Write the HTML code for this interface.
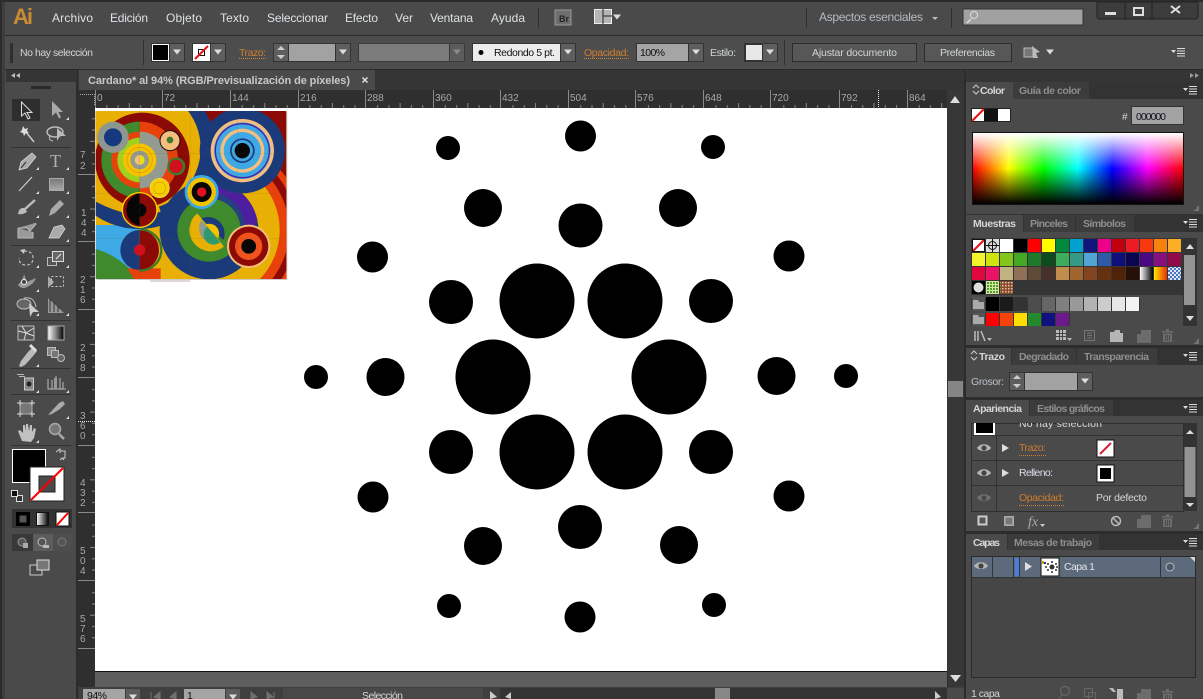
<!DOCTYPE html>
<html lang="es"><head><meta charset="utf-8"><title>Cardano</title>
<style>
html,body{margin:0;padding:0;background:#4a4a4a;width:1203px;height:699px;overflow:hidden}
svg{display:block}
text{font-family:"Liberation Sans",sans-serif;font-size:11px;fill:#d2d6d9}
.m{font-size:12px;fill:#dde1e4}
.d{fill:#111;font-size:10.5px}
.o{fill:#d07f30}
.g{fill:#8e8e8e;font-weight:bold;font-size:10.5px}
.b{font-weight:bold;font-size:10.5px;fill:#d6d6d6}
.r{font-size:10px;fill:#a8a8a8}
</style></head><body>
<svg width="1203" height="699" viewBox="0 0 1203 699" xmlns="http://www.w3.org/2000/svg">
<defs>
<linearGradient id="sp" x1="0" x2="1" y1="0" y2="0"><stop offset="0" stop-color="#f00"/><stop offset=".17" stop-color="#ff0"/><stop offset=".335" stop-color="#0f0"/><stop offset=".5" stop-color="#0ff"/><stop offset=".665" stop-color="#00f"/><stop offset=".83" stop-color="#f0f"/><stop offset="1" stop-color="#f00"/></linearGradient>
<linearGradient id="ov" x1="0" x2="0" y1="0" y2="1"><stop offset="0" stop-color="#fff"/><stop offset=".5" stop-color="#fff" stop-opacity="0"/><stop offset=".5" stop-color="#000" stop-opacity="0"/><stop offset="1" stop-color="#000"/></linearGradient>
<linearGradient id="bw" x1="0" x2="1" y1="0" y2="0"><stop offset="0" stop-color="#fff"/><stop offset="1" stop-color="#000"/></linearGradient>
<linearGradient id="yr" x1="0" x2="1" y1="0" y2="0"><stop offset="0" stop-color="#ffe600"/><stop offset="1" stop-color="#e8300a"/></linearGradient>
<linearGradient id="gr" x1="0" x2="0" y1="0" y2="1"><stop offset="0" stop-color="#777"/><stop offset="1" stop-color="#aaa"/></linearGradient>
<pattern id="rt" x="95" y="100" width="67.7" height="8" patternUnits="userSpaceOnUse"><rect x="11.3" y="5" width="1" height="3" fill="#888"/><rect x="22.6" y="5" width="1" height="3" fill="#888"/><rect x="33.8" y="3" width="1" height="5" fill="#888"/><rect x="45.1" y="5" width="1" height="3" fill="#888"/><rect x="56.4" y="5" width="1" height="3" fill="#888"/></pattern>
<pattern id="rv" x="90" y="107" width="6" height="67.7" patternUnits="userSpaceOnUse"><rect x="2" y="11.3" width="3" height="1" fill="#888"/><rect x="2" y="22.6" width="3" height="1" fill="#888"/><rect x="0" y="33.8" width="5" height="1" fill="#888"/><rect x="2" y="45.1" width="3" height="1" fill="#888"/><rect x="2" y="56.4" width="3" height="1" fill="#888"/></pattern>
<pattern id="ch" width="4" height="4" patternUnits="userSpaceOnUse"><rect width="4" height="4" fill="#4a78c0"/><rect width="2" height="2" fill="#dfe6f2"/><rect x="2" y="2" width="2" height="2" fill="#dfe6f2"/></pattern>
<pattern id="gp" width="3" height="3" patternUnits="userSpaceOnUse"><rect width="3" height="3" fill="#d8e6a0"/><rect width="2" height="2" fill="#4aa02a"/></pattern>
<pattern id="bp" width="3" height="3" patternUnits="userSpaceOnUse"><rect width="3" height="3" fill="#8a4a2a"/><rect width="1.500" height="1.500" fill="#e0c8b0"/></pattern>
<path id="dn" d="M-4 -2.5H4L0 2.5Z" fill="#ddd"/>
<path id="c" d="M3 0V3H0Z" fill="#ddd"/>
<g id="mn" fill="#ddd"><path d="M0 3H5L2.5 6Z"/><rect x="6" y="1" width="8" height="1"/><rect x="6" y="3.5" width="8" height="1"/><rect x="6" y="6" width="8" height="1"/><rect x="6" y="8.5" width="8" height="1"/></g>
<g id="eye"><path d="M-7 0C-4 -5 4 -5 7 0C4 4 -4 4 -7 0Z" fill="#b5b5b5"/><circle r="2.6" fill="#444"/></g>
<g id="tr" fill="#6c6c6c"><rect x="0" y="2" width="11" height="1.5"/><rect x="4" y="0" width="3" height="2"/><path d="M1 4.5H10V13H1ZM3 6V12H4V6ZM5 6V12H6V6ZM7 6V12H8V6Z" fill-rule="evenodd"/></g>
<g id="nw" fill="#6c6c6c"><path d="M4 0H14V13H0V4H4Z"/></g>
<g id="fd"><path d="M1 3H5L6 1H11V4H14V13H1Z" fill="#b5b5b5"/></g>
<clipPath id="cp"><rect x="5" y="18" width="572" height="504"/></clipPath>
<clipPath id="lh"><rect x="0" y="0" width="137" height="540"/></clipPath>
<clipPath id="rh"><rect x="137" y="0" width="500" height="540"/></clipPath>
<clipPath id="tc"><rect x="971" y="423" width="212" height="12"/></clipPath>
</defs>

<!-- base -->
<rect width="1203" height="699" fill="#4a4a4a"/>
<rect width="1203" height="2" fill="#2c2c2c"/>
<rect x="0" y="0" width="2" height="699" fill="#2c2c2c"/>
<rect x="2" y="2" width="3" height="697" fill="#3e3e3e"/>
<rect x="5" y="36" width="1198" height="34" fill="#4d4d4d"/>
<rect x="5" y="35" width="1198" height="1" fill="#2b2b2b"/>
<rect x="5" y="69" width="1198" height="1" fill="#2b2b2b"/>

<!-- menu -->
<text x="13" y="24" textLength="20" style="font-size:22px;font-weight:bold;fill:#c98b34">Ai</text>
<text class="m" x="52" y="22" textLength="41">Archivo</text>
<text class="m" x="110" y="22" textLength="38">Edición</text>
<text class="m" x="166" y="22" textLength="36">Objeto</text>
<text class="m" x="220" y="22" textLength="29">Texto</text>
<text class="m" x="267" y="22" textLength="61">Seleccionar</text>
<text class="m" x="345" y="22" textLength="33">Efecto</text>
<text class="m" x="395" y="22" textLength="18">Ver</text>
<text class="m" x="430" y="22" textLength="43">Ventana</text>
<text class="m" x="491" y="22" textLength="34">Ayuda</text>
<rect x="538" y="8" width="1" height="20" fill="#2e2e2e"/>
<rect x="555" y="10" width="16" height="15" fill="#6e6e6e" stroke="#999"/>
<text x="559" y="22" style="font-size:9px;font-weight:bold;fill:#222">Br</text>
<rect x="594.500" y="9.500" width="17" height="14" fill="#b5b5b5" stroke="#eee"/>
<path d="M603 9V24M603 16H612" stroke="#222" fill="none"/>
<use href="#dn" x="617" y="17"/>
<rect x="806" y="8" width="1" height="20" fill="#2e2e2e"/>
<text x="819" y="21" textLength="104" style="font-size:12px;fill:#b4bbc1">Aspectos esenciales</text>
<path d="M932 17H938L935 20Z" fill="#bbb"/>
<rect x="951" y="8" width="1" height="20" fill="#2e2e2e"/>
<rect x="963" y="9" width="120" height="16" fill="#a1a1a1" stroke="#333"/>
<circle cx="974" cy="15" r="3.500" fill="none" stroke="#ddd"/><path d="M971 19L967 23" stroke="#ddd" stroke-width="1.500"/>
<path d="M1097 2V16Q1097 19 1100 19H1195Q1198 19 1198 16V2Z" fill="#3c3c3c" stroke="#222"/>
<path d="M1125 2V19M1152 2V19" stroke="#222"/>
<rect x="1105" y="12" width="11" height="3" fill="#ddd"/>
<rect x="1134" y="8" width="9" height="7" fill="none" stroke="#ddd" stroke-width="2"/>
<path d="M1171 6L1180 13M1180 6L1171 13" stroke="#ddd" stroke-width="2"/>

<!-- control bar -->
<rect x="10" y="43" width="3" height="20" fill="#222" opacity=".7"/>
<text x="20" y="56" textLength="73" style="font-size:10.500px">No hay selección</text>
<rect x="143" y="40" width="1" height="25" fill="#333"/>
<rect x="151" y="43" width="34" height="19" fill="#333"/>
<rect x="152.500" y="44.500" width="16" height="16" fill="#000" stroke="#fff"/>
<rect x="170" y="44" width="14" height="17" fill="#5e5e5e"/><use href="#dn" x="177" y="52"/>
<rect x="192" y="43" width="34" height="19" fill="#333"/>
<rect x="193" y="44" width="17" height="17" fill="#fff"/>
<rect x="198.500" y="49.500" width="6" height="6" fill="none" stroke="#111"/>
<path d="M195 59L208 46" stroke="#e81010" stroke-width="2"/>
<rect x="211" y="44" width="14" height="17" fill="#5e5e5e"/><use href="#dn" x="218" y="52"/>
<text class="o" x="239" y="56" textLength="27" style="font-size:10.500px">Trazo:</text>
<path d="M239 58.500H266" stroke="#d07f30" stroke-dasharray="1 1"/>
<rect x="273" y="43" width="78" height="19" fill="#333"/>
<rect x="274" y="44" width="14" height="17" fill="#5e5e5e"/><path d="M277 50H285L281 46ZM277 55H285L281 59Z" fill="#ccc"/>
<rect x="289" y="44" width="46" height="17" fill="#a2a2a2"/>
<rect x="336" y="44" width="14" height="17" fill="#5e5e5e"/><use href="#dn" x="343" y="52"/>
<rect x="358" y="43" width="107" height="19" fill="#3a3a3a"/>
<rect x="359" y="44" width="90" height="17" fill="#7b7b7b"/>
<rect x="450" y="44" width="14" height="17" fill="#5c5c5c"/><use href="#dn" x="457" y="52" opacity=".35"/>
<rect x="472" y="43" width="104" height="19" fill="#333"/>
<rect x="473" y="44" width="87" height="17" fill="#ececec"/>
<circle cx="481" cy="52.500" r="2.500" fill="#000"/>
<text class="d" x="494" y="56" textLength="61">Redondo 5 pt.</text>
<rect x="561" y="44" width="14" height="17" fill="#5e5e5e"/><use href="#dn" x="568" y="52"/>
<text class="o" x="584" y="56" textLength="45" style="font-size:10.500px">Opacidad:</text>
<path d="M584 58.500H629" stroke="#d07f30" stroke-dasharray="1 1"/>
<rect x="636" y="43" width="68" height="19" fill="#333"/>
<rect x="637" y="44" width="51" height="17" fill="#a5a5a5"/>
<text class="d" x="640" y="56" textLength="25">100%</text>
<rect x="689" y="44" width="14" height="17" fill="#5e5e5e"/><use href="#dn" x="696" y="52"/>
<text x="710" y="56" textLength="26" style="font-size:10.500px">Estilo:</text>
<rect x="744" y="43" width="34" height="19" fill="#333"/>
<rect x="746" y="45" width="16" height="15" fill="#e8e8e8"/>
<rect x="763" y="44" width="14" height="17" fill="#5e5e5e"/><use href="#dn" x="770" y="52"/>
<rect x="784" y="40" width="1" height="25" fill="#333"/>
<rect x="792.500" y="43.500" width="124" height="18" fill="#575757" stroke="#2c2c2c"/>
<text x="812" y="56" textLength="85" style="font-size:10.500px">Ajustar documento</text>
<rect x="924.500" y="43.500" width="87" height="18" fill="#575757" stroke="#2c2c2c"/>
<text x="940" y="56" textLength="55" style="font-size:10.500px">Preferencias</text>
<path d="M1024 48H1033V57H1024Z" fill="#777" stroke="#bbb"/><path d="M1032 46L1040 52L1036 53L1038 58L1033 58Z" fill="#bbb"/>
<use href="#dn" x="1050" y="52"/>
<use href="#mn" x="1171" y="47"/>

<!-- tab strip -->
<rect x="78" y="70" width="886" height="20" fill="#353535"/>
<rect x="79" y="70" width="296" height="20" fill="#4a4a4a"/>
<text x="88" y="84" textLength="262" style="font-size:11px;font-weight:bold;fill:#c8c8c8">Cardano* al 94% (RGB/Previsualización de píxeles)</text>
<path d="M362.500 77.500L367.500 82.500M367.500 77.500L362.500 82.500" stroke="#ddd" stroke-width="1.500"/>

<!-- rulers -->
<rect x="78" y="90" width="886" height="18" fill="#2f2f2f"/>
<rect x="78" y="90" width="17" height="609" fill="#2f2f2f"/>
<rect x="95" y="100" width="852" height="8" fill="url(#rt)"/>
<rect x="90" y="108" width="6" height="540" fill="url(#rv)"/>
<path d="M95.500 90V108M162.500 90V108M230.500 90V108M298.500 90V108M365.500 90V108M433.500 90V108M500.500 90V108M568.500 90V108M635.500 90V108M703.500 90V108M770.500 90V108M839.500 90V108M907.500 90V108" stroke="#8a8a8a"/>
<path d="M78 174.500H95M78 241.500H95M78 309.500H95M78 377.500H95M78 445.500H95M78 512.500H95M78 580.500H95M78 648.500H95" stroke="#8a8a8a"/>
<path d="M80 94.500H95M94.500 94V106" stroke="#aaa" stroke-dasharray="1 1"/>
<path d="M878.500 90V108" stroke="#eee" stroke-dasharray="1 1"/>
<path d="M78 421.500H95" stroke="#eee" stroke-dasharray="1 1"/>
<text class="r" x="97" y="101">0</text><text class="r" x="164" y="101">72</text><text class="r" x="232" y="101">144</text><text class="r" x="300" y="101">216</text><text class="r" x="367" y="101">288</text><text class="r" x="435" y="101">360</text><text class="r" x="502" y="101">432</text><text class="r" x="570" y="101">504</text><text class="r" x="637" y="101">576</text><text class="r" x="705" y="101">648</text><text class="r" x="772" y="101">720</text><text class="r" x="841" y="101">792</text><text class="r" x="909" y="101">864</text>
<g>
<text class="r" x="80" y="158">7</text><text class="r" x="80" y="169">2</text>
<text class="r" x="81" y="216">1</text><text class="r" x="81" y="226">4</text><text class="r" x="81" y="236">4</text>
<text class="r" x="80" y="283">2</text><text class="r" x="80" y="293">1</text><text class="r" x="80" y="303">6</text>
<text class="r" x="80" y="351">2</text><text class="r" x="80" y="361">8</text><text class="r" x="80" y="371">8</text>
<text class="r" x="80" y="419">3</text><text class="r" x="80" y="429">6</text><text class="r" x="80" y="439">0</text>
<text class="r" x="80" y="486">4</text><text class="r" x="80" y="496">3</text><text class="r" x="80" y="506">2</text>
<text class="r" x="80" y="554">5</text><text class="r" x="80" y="564">0</text><text class="r" x="80" y="574">4</text>
<text class="r" x="80" y="622">5</text><text class="r" x="80" y="632">7</text><text class="r" x="80" y="642">6</text>
</g>

<!-- canvas -->
<rect x="95" y="108" width="852" height="580" fill="#5e5e5e"/>
<rect x="95" y="108" width="852" height="563" fill="#fff"/>
<rect x="95" y="671" width="852" height="1" fill="#111"/>
<rect x="95" y="687" width="852" height="1" fill="#2e2e2e"/>
<rect x="150" y="280" width="40" height="2" fill="#e0d8d8"/>

<!-- cardano logo -->
<g fill="#000">
<circle cx="537" cy="301" r="37.500"/><circle cx="625" cy="301" r="37.500"/><circle cx="493" cy="377" r="37.500"/><circle cx="669" cy="377" r="37.500"/><circle cx="537" cy="452" r="37.500"/><circle cx="625" cy="452" r="37.500"/>
<circle cx="451" cy="302" r="22"/><circle cx="711" cy="301" r="22"/><circle cx="451" cy="452" r="22"/><circle cx="711" cy="452" r="22"/><circle cx="580.500" cy="225.500" r="22"/><circle cx="580" cy="527" r="22"/>
<circle cx="385.500" cy="377" r="19"/><circle cx="776.500" cy="376" r="19"/><circle cx="483" cy="208" r="19"/><circle cx="678" cy="208" r="19"/><circle cx="483" cy="546" r="19"/><circle cx="679" cy="545" r="19"/>
<circle cx="372.500" cy="257" r="15.500"/><circle cx="789" cy="256" r="15.500"/><circle cx="373" cy="497" r="15.500"/><circle cx="789" cy="496" r="15.500"/><circle cx="580.500" cy="136" r="15.500"/><circle cx="580" cy="617" r="15.500"/>
<circle cx="448" cy="148" r="12"/><circle cx="713" cy="147" r="12"/><circle cx="449" cy="606" r="12"/><circle cx="714" cy="605" r="12"/><circle cx="316" cy="377" r="12"/><circle cx="846" cy="376" r="12"/>
</g>

<!-- painting -->
<g transform="translate(94 105) scale(.33333)">
<rect x="8" y="21" width="572" height="504" fill="#999" opacity=".5"/>
<g clip-path="url(#cp)">
<rect x="5" y="18" width="572" height="504" fill="#e8b004"/>
<rect x="320" y="18" width="257" height="200" fill="#8b0a05"/>
<circle cx="345" cy="375" r="280" fill="#e8420c"/>
<circle cx="345" cy="375" r="262" fill="#8b0a05"/>
<circle cx="345" cy="375" r="240" fill="#e8420c"/>
<circle cx="345" cy="375" r="212" fill="#e8b004"/>
<rect x="5" y="360" width="130" height="162" fill="#3fa9e5"/>
<path d="M5 432Q70 450 125 510V522H5Z" fill="#3f8a2c"/>
<path d="M100 490H200V522H120Z" fill="#e8420c"/>
<circle cx="135" cy="140" r="232" fill="#1b3a7a"/>
<path d="M5 290Q120 350 200 320L190 290L5 250Z" fill="#e8b004"/>
<circle cx="135" cy="130" r="185" fill="#e8b004"/>
<circle cx="145" cy="165" r="142" fill="#8b0a05"/>
<g clip-path="url(#lh)">
<circle cx="137" cy="165" r="115" fill="#3f8a2c"/><circle cx="137" cy="165" r="85" fill="#e8420c"/><circle cx="137" cy="165" r="67" fill="#9ed21e"/>
</g>
<g clip-path="url(#rh)">
<circle cx="137" cy="165" r="115" fill="#e8420c"/><circle cx="137" cy="165" r="85" fill="#939a90"/>
</g>
<circle cx="137" cy="165" r="50" fill="#f5c400"/>
<circle cx="137" cy="165" r="38" fill="none" stroke="#e8a000" stroke-width="3"/>
<circle cx="137" cy="165" r="28" fill="#939a90"/>
<path d="M137 150A15 15 0 0 0 137 180Z" fill="#f6bd7c"/><path d="M137 150A15 15 0 0 1 137 180Z" fill="#eadf10"/>
<circle cx="57" cy="97" r="47" fill="#8e9690"/><circle cx="57" cy="97" r="27" fill="#14397f"/>
<circle cx="228" cy="107" r="30" fill="#f6bd7c" stroke="#111" stroke-width="3"/><circle cx="228" cy="105" r="10" fill="#3f7a2c"/>
<circle cx="247" cy="184" r="27" fill="#3f7a2c"/><circle cx="246" cy="184" r="20" fill="#d0101c"/>
<circle cx="197" cy="249" r="29" fill="#f5d000" stroke="#e8e060" stroke-width="2"/><circle cx="197" cy="249" r="18" fill="none" stroke="#d8a000" stroke-width="2"/>
<circle cx="137" cy="315" r="52" fill="#8b0a05" stroke="#f5d800" stroke-width="4"/>
<path d="M137 265A50 50 0 0 0 137 363Z" fill="#060606"/><circle cx="137" cy="315" r="20" fill="#060606"/>
<path d="M137 375A58 60 0 0 0 137 495Z" fill="#1b3a7a"/><path d="M137 375A58 60 0 0 1 137 495Z" fill="#8b0a05"/>
<path d="M137 373A65 62 0 0 1 137 497" fill="none" stroke="#3f7a2c" stroke-width="7"/>
<circle cx="137" cy="435" r="17" fill="#d0101c"/>
<circle cx="345" cy="375" r="148" fill="#1b3a7a"/>
<path d="M345 227A148 148 0 0 1 490 345L440 450Z" fill="#4d1fa0"/>
<path d="M345 262A112 112 0 0 1 455 375L345 375Z" fill="#24407e"/>
<circle cx="345" cy="375" r="95" fill="#3f8a2c"/>
<circle cx="345" cy="375" r="68" fill="#3f8a2c"/>
<path d="M310 325A62 62 0 0 0 390 425Z" fill="#e8b004"/>
<path d="M322 345A46 46 0 0 0 378 412Z" fill="#939a90"/>
<path d="M340 365L378 412A30 30 0 0 1 340 365Z" fill="#2e9a6e"/>
<path d="M322 340A50 50 0 0 1 388 405Z" fill="#1b3a7a"/>
<path d="M335 358A30 30 0 0 1 372 400Z" fill="#f2c400"/>
<circle cx="445" cy="137" r="128" fill="#1b3a7a"/>
<circle cx="445" cy="137" r="95" fill="#f6bd7c"/>
<circle cx="445" cy="137" r="85" fill="#3fa9e5"/>
<circle cx="445" cy="137" r="81" fill="none" stroke="#4d1fa0" stroke-width="4"/>
<circle cx="445" cy="137" r="66" fill="#f6bd7c"/>
<circle cx="445" cy="137" r="56" fill="#3fa9e5"/>
<circle cx="445" cy="137" r="37" fill="#1b3a7a"/>
<circle cx="445" cy="137" r="32" fill="#3fa9e5"/>
<circle cx="445" cy="137" r="23" fill="#060606"/>
<circle cx="323" cy="261" r="51" fill="#3fa9e5"/><circle cx="323" cy="261" r="43" fill="#f2c400"/><circle cx="323" cy="261" r="30" fill="#060606"/><circle cx="323" cy="261" r="14" fill="#e0101c"/>
<circle cx="464" cy="424" r="65" fill="#f6bd7c"/><circle cx="464" cy="424" r="59" fill="#8b0a05"/><circle cx="464" cy="424" r="41" fill="#f0531c"/><circle cx="464" cy="424" r="22" fill="#060606"/>
<path d="M5 145H577M5 265H577M5 400H577M137 18V522M290 18V522M430 18V522" stroke="#6a5a20" stroke-width="1" opacity=".35"/>
</g>
</g>

<!-- vertical scrollbar -->
<rect x="947" y="90" width="17" height="597" fill="#373737"/>
<path d="M950 103H960L955 96Z" fill="#ddd"/>
<rect x="948" y="381" width="15" height="16" fill="#858585"/>
<path d="M950 675H961L955.500 682Z" fill="#ddd"/>
<rect x="947" y="672" width="1" height="15" fill="#2c2c2c"/>

<!-- status bar -->
<rect x="78" y="687" width="886" height="12" fill="#3f3f3f"/>
<rect x="83" y="689" width="42" height="10" fill="#a5a5a5"/>
<text class="d" x="87" y="699" textLength="20">94%</text>
<rect x="126" y="689" width="14" height="10" fill="#5c5c5c"/><use href="#dn" x="133" y="697"/>
<path d="M151 692V699M160 692L154 697L160 699ZM176 692L170 697L176 699Z" fill="#707070" stroke="#707070"/>
<rect x="184" y="689" width="41" height="10" fill="#a5a5a5"/>
<text class="d" x="187" y="699">1</text>
<rect x="226" y="689" width="14" height="10" fill="#5c5c5c"/><use href="#dn" x="233" y="697"/>
<path d="M251 692L257 697L251 699ZM267 692L273 697L267 699ZM274 692V699" fill="#707070" stroke="#707070"/>
<rect x="283" y="688" width="200" height="11" fill="#484848"/>
<text x="362" y="699" textLength="41" style="font-size:10.500px">Selección</text>
<path d="M490 691L497 697L490 699Z" fill="#ccc"/>
<rect x="500" y="688" width="447" height="11" fill="#333"/>
<path d="M511 692L505 697L511 699Z" fill="#ccc"/>
<rect x="715" y="688" width="15" height="11" fill="#878787"/>
<path d="M935 691L941 697L935 699Z" fill="#ccc"/>
<rect x="947" y="688" width="17" height="11" fill="#4a4a4a"/>

<!-- toolbar -->
<rect x="6" y="70" width="71" height="629" fill="#4a4a4a"/>
<rect x="76" y="70" width="2" height="629" fill="#2c2c2c"/>
<rect x="6" y="70" width="71" height="12" fill="#353535"/>
<path d="M15 73V78L11 75.500ZM20 73V78L16 75.500Z" fill="#bbb"/>
<rect x="31" y="86" width="20" height="3" fill="#222" opacity=".8"/>
<rect x="12" y="99" width="28" height="22" fill="#2e2e2e"/>
<g stroke="#2f2f2f" fill="none"><path d="M11 147.500H71M11 245.500H71M11 320.500H71M11 368.500H71M11 394.500H71M11 445.500H71" stroke="#333"/></g>
<!-- icons -->
<path d="M21.500 102V116L25 113L28 119L30 118L27 112.500L32 112.500Z" fill="#2e2e2e" stroke="#ddd"/>
<path d="M52 101V116L56 112.500L59 118.500L61 117.500L58.500 112H63Z" fill="#a8a8a8"/>
<path d="M26 132L34 142" stroke="#ccc" stroke-width="1.500"/><path d="M23 126L25 129L28 128L27 131L29 133L26 133L24 136L23 133L20 132L22 130Z" fill="#ddd"/>
<ellipse cx="55" cy="132" rx="8" ry="5" fill="none" stroke="#bbb" stroke-width="1.500"/><path d="M57 128L66 136H60L57 141Z" fill="#bbb"/><path d="M50 136Q48 140 53 141" fill="none" stroke="#bbb"/>
<path d="M32 153L36 157L27 168L19 170L21 162Z" fill="#aaa" stroke="#ddd" stroke-width=".7"/><path d="M21 168L26 162" stroke="#333"/>
<text x="50" y="167" style="font-family:'Liberation Serif',serif;font-size:18px;fill:#b0b0b0">T</text>
<path d="M19 191L32 177" stroke="#ccc" stroke-width="1.200"/>
<rect x="49.500" y="178.500" width="14" height="12" fill="url(#gr)" stroke="#aaa"/>
<path d="M35 200L24 210" stroke="#bbb" stroke-width="2.500"/><path d="M18 214Q19 207 25 208L27 212Q22 215 18 214Z" fill="#bbb"/>
<path d="M49 216L51 209L60 200L64 204L55 213Z" fill="#aaa"/>
<path d="M18 228H27L30 231L36 224L35 223M18 228V238H33V232" fill="#999" stroke="#bbb"/>
<path d="M49 238L54 227L62 225L65 229L59 238Z" fill="#aaa" stroke="#ddd" stroke-width=".7"/>
<path d="M24 251Q33 251 33 258Q33 265 26 265Q19 265 19 258" fill="none" stroke="#bbb" stroke-width="1.200" stroke-dasharray="3 2"/><path d="M20 250L25 249L24 254Z" fill="#ccc"/>
<rect x="47.500" y="257.500" width="9" height="8" fill="#555" stroke="#bbb"/><rect x="52.500" y="251.500" width="11" height="10" fill="#666" stroke="#ddd"/><path d="M56 259L61 254" stroke="#eee"/>
<path d="M18 285Q24 278 24 274L27 282Q31 280 36 278Q34 284 27 287Q22 290 18 285Z" fill="#999"/><circle cx="24" cy="282" r="2.500" fill="#444" stroke="#eee"/>
<path d="M48 276L54 282L48 288Z" fill="#aaa"/><rect x="51.500" y="276.500" width="12" height="10" fill="none" stroke="#ccc" stroke-dasharray="2 2"/>
<ellipse cx="24" cy="304" rx="7" ry="5" fill="#666" stroke="#bbb"/><path d="M24 298Q34 296 36 307" fill="none" stroke="#bbb"/><path d="M29 303L39 312H33L30 317Z" fill="#ccc"/>
<path d="M48 298V313H64L48 298Z" fill="#999"/><path d="M50 298V312M54 302V312M58 306V312" stroke="#333"/>
<rect x="18" y="326" width="16" height="14" fill="#555" stroke="#bbb"/><path d="M18 331L26 333L34 328M22 326L26 333L24 340M26 333L34 336" stroke="#ddd" fill="none"/>
<rect x="48" y="326" width="16" height="14" fill="url(#bw)" stroke="#aaa"/>
<path d="M33 347L28 352L21 361L19 366L21 367L25 365L34 355L37 351Z" fill="#bbb"/><path d="M30 345L36 351" stroke="#ddd" stroke-width="3"/>
<rect x="47.500" y="347.500" width="8" height="8" fill="#888" stroke="#bbb"/><rect x="51.500" y="350.500" width="7" height="7" fill="#777" stroke="#bbb"/><circle cx="61" cy="358" r="3.500" fill="#666" stroke="#bbb"/>
<rect x="24.500" y="378" width="9" height="12" fill="#888" stroke="#ccc"/><circle cx="29" cy="384" r="2.500" fill="#222"/><rect x="17" y="374" width="7" height="1" fill="#bbb"/><rect x="19" y="376" width="6" height="1" fill="#bbb"/>
<path d="M48 379V389H66M52 389V380M56 389V376M60 389V378M63 389V382" stroke="#bbb" fill="none"/><rect x="54" y="378" width="3" height="11" fill="#999"/>
<rect x="20" y="403" width="12" height="11" fill="#777" stroke="#aaa"/><path d="M17 403H23M29 403H35M17 414H23M29 414H35M20 400V406M32 400V406M20 411V417M32 411V417" stroke="#ddd"/>
<path d="M48 415L59 403L63 401L65 404L60 409L52 414Z" fill="#aaa"/>
<path d="M22 441L18 431L20 430L23 433L23 425L25 425L26 431L26 424L28 424L29 431L30 425L32 425L32 432L34 428L36 429L34 438L31 442Z" fill="#c0c0c0"/>
<circle cx="55" cy="429" r="5.500" fill="#777" stroke="#aaa" stroke-width="1.500"/><path d="M59 434L64 439" stroke="#aaa" stroke-width="2.500"/>
<!-- small triangles -->
<use href="#c" x="66" y="117"/><use href="#c" x="36" y="167"/><use href="#c" x="66" y="167"/><use href="#c" x="36" y="191"/><use href="#c" x="66" y="191"/><use href="#c" x="36" y="215"/><use href="#c" x="66" y="215"/><use href="#c" x="66" y="239"/><use href="#c" x="36" y="265"/><use href="#c" x="66" y="265"/><use href="#c" x="36" y="289"/><use href="#c" x="36" y="313"/><use href="#c" x="66" y="313"/><use href="#c" x="36" y="364"/><use href="#c" x="36" y="390"/><use href="#c" x="66" y="390"/><use href="#c" x="66" y="416"/><use href="#c" x="36" y="440"/>
<!-- fill stroke -->
<rect x="12.500" y="449.500" width="33" height="33" fill="#000" stroke="#fff"/>
<rect x="30" y="467" width="34" height="34" fill="#fff" stroke="#222"/>
<rect x="39" y="476" width="16" height="16" fill="#4a4a4a" stroke="#222"/>
<path d="M31 500L63 468" stroke="#f00" stroke-width="2"/>
<path d="M56 452L60 449V451H65V458H62M60 453V451M62 458L64 460M62 458L60 460" fill="none" stroke="#ccc"/>
<rect x="16.500" y="495.500" width="6" height="6" fill="#333" stroke="#ddd"/><rect x="11.500" y="490.500" width="6" height="6" fill="#111" stroke="#ddd"/>
<rect x="12" y="509" width="60" height="19" fill="#333"/>
<rect x="16" y="512" width="14" height="14" fill="#000"/><rect x="19.500" y="515.500" width="7" height="7" fill="#555"/>
<rect x="36.500" y="512.500" width="12" height="13" fill="url(#bw)" stroke="#111"/>
<rect x="56" y="512" width="13" height="14" fill="#fff" stroke="#111"/><path d="M57 525L68 513" stroke="#f00" stroke-width="2"/>
<rect x="12" y="534" width="60" height="17" fill="#383838"/><rect x="33" y="534" width="20" height="17" fill="#5c5c5c"/><rect x="53" y="534" width="19" height="17" fill="#4e4e4e"/>
<circle cx="22" cy="542" r="4" fill="#555" stroke="#999"/><rect x="23" y="543" width="5" height="5" fill="#aaa"/>
<circle cx="42" cy="542" r="4" fill="#555" stroke="#bbb"/><rect x="43" y="545" width="6" height="3" fill="#bbb"/>
<circle cx="62" cy="542" r="4" fill="#555" stroke="#777"/>
<rect x="30" y="565" width="12" height="10" fill="#4a4a4a" stroke="#ccc"/><rect x="37" y="560" width="12" height="10" fill="#777" stroke="#ddd"/>

<!-- right dock -->
<rect x="964" y="70" width="239" height="629" fill="#4a4a4a"/>
<rect x="964" y="70" width="2" height="629" fill="#2c2c2c"/>
<rect x="966" y="70" width="237" height="12" fill="#353535"/>
<path d="M1190 73V78L1194 75.500ZM1195 73V78L1199 75.500Z" fill="#999"/>

<!-- Color panel -->
<rect x="966" y="82" width="237" height="17" fill="#333"/>
<rect x="1013" y="82" width="76" height="17" fill="#3c3c3c"/>
<rect x="966" y="82" width="47" height="18" fill="#4a4a4a"/>
<path d="M973 88L976 85L979 88M973 91L976 94L979 91" fill="none" stroke="#ccc"/>
<text class="b" x="980" y="94" textLength="25">Color</text>
<text class="g" x="1019" y="94" textLength="62">Guía de color</text>
<use href="#mn" x="1183" y="85"/>
<rect x="971.500" y="108.500" width="39" height="13" fill="#111" stroke="#222"/>
<rect x="972" y="109" width="12" height="12" fill="#fff"/><path d="M972 121L984 109" stroke="#e81010" stroke-width="2"/>
<rect x="998" y="109" width="12" height="12" fill="#fff"/>
<text x="1122" y="120" style="font-size:10px">#</text>
<rect x="1131.500" y="106.500" width="52" height="18" fill="#a3a3a3" stroke="#333"/>
<text x="1136" y="120" textLength="30" style="font-size:10.500px;fill:#112">000000</text>
<rect x="972" y="132" width="212" height="73" fill="#111"/>
<rect x="973" y="133" width="210" height="71" fill="url(#sp)"/>
<rect x="973" y="133" width="210" height="71" fill="url(#ov)"/>
<path d="M1196 208H1199V205ZM1193 211H1199V207" fill="#777"/>

<!-- Muestras -->
<rect x="966" y="214" width="237" height="18" fill="#333"/>
<rect x="1024" y="215" width="51" height="17" fill="#3c3c3c"/><rect x="1076" y="215" width="58" height="17" fill="#3c3c3c"/>
<rect x="966" y="215" width="57" height="18" fill="#4a4a4a"/>
<text class="b" x="973" y="227" textLength="43">Muestras</text>
<text class="g" x="1030" y="227" textLength="38">Pinceles</text>
<text class="g" x="1083" y="227" textLength="43">Símbolos</text>
<use href="#mn" x="1183" y="218"/>
<rect x="971" y="238" width="212" height="88" fill="#353535"/>
<g>
<rect x="972" y="239" width="13" height="13" fill="#fff"/><path d="M973 251L984 240" stroke="#e81010" stroke-width="2"/><rect x="972.500" y="239.500" width="12" height="12" fill="none" stroke="#111"/>
<rect x="986" y="239" width="13" height="13" fill="#ddd"/><circle cx="992.500" cy="245.500" r="4" fill="none" stroke="#111"/><path d="M986 245.500H999M992.500 239V252" stroke="#111"/>
<rect x="1000" y="239" width="13" height="13" fill="#fff"/><rect x="1014" y="239" width="13" height="13" fill="#000"/><rect x="1028" y="239" width="13" height="13" fill="#f00"/><rect x="1042" y="239" width="13" height="13" fill="#ff0"/><rect x="1056" y="239" width="13" height="13" fill="#00893c"/><rect x="1070" y="239" width="13" height="13" fill="#00a0d0"/><rect x="1084" y="239" width="13" height="13" fill="#14147f"/><rect x="1098" y="239" width="13" height="13" fill="#ec008c"/><rect x="1112" y="239" width="13" height="13" fill="#c1000f"/><rect x="1126" y="239" width="13" height="13" fill="#ed1c24"/><rect x="1140" y="239" width="13" height="13" fill="#f7390f"/><rect x="1154" y="239" width="13" height="13" fill="#f7810f"/><rect x="1168" y="239" width="13" height="13" fill="#fbae26"/>
<rect x="972" y="253" width="13" height="13" fill="#f3f42c"/><rect x="986" y="253" width="13" height="13" fill="#cfe40f"/><rect x="1000" y="253" width="13" height="13" fill="#84c51c"/><rect x="1014" y="253" width="13" height="13" fill="#45a824"/><rect x="1028" y="253" width="13" height="13" fill="#20782a"/><rect x="1042" y="253" width="13" height="13" fill="#0e4a1e"/><rect x="1056" y="253" width="13" height="13" fill="#3eac5c"/><rect x="1070" y="253" width="13" height="13" fill="#349a86"/><rect x="1084" y="253" width="13" height="13" fill="#51a5d4"/><rect x="1098" y="253" width="13" height="13" fill="#2e5aa7"/><rect x="1112" y="253" width="13" height="13" fill="#0e0f7b"/><rect x="1126" y="253" width="13" height="13" fill="#0c0552"/><rect x="1140" y="253" width="13" height="13" fill="#4b0a83"/><rect x="1154" y="253" width="13" height="13" fill="#85107e"/><rect x="1168" y="253" width="13" height="13" fill="#910a4c"/>
<rect x="972" y="267" width="13" height="13" fill="#e0073f"/><rect x="986" y="267" width="13" height="13" fill="#ea1367"/><rect x="1000" y="267" width="13" height="13" fill="#c2b280"/><rect x="1014" y="267" width="13" height="13" fill="#8f7158"/><rect x="1028" y="267" width="13" height="13" fill="#5f4a38"/><rect x="1042" y="267" width="13" height="13" fill="#46302a"/><rect x="1056" y="267" width="13" height="13" fill="#c28c4c"/><rect x="1070" y="267" width="13" height="13" fill="#a0652e"/><rect x="1084" y="267" width="13" height="13" fill="#824520"/><rect x="1098" y="267" width="13" height="13" fill="#65310f"/><rect x="1112" y="267" width="13" height="13" fill="#512207"/><rect x="1126" y="267" width="13" height="13" fill="#271008"/><rect x="1140" y="267" width="13" height="13" fill="url(#bw)"/><rect x="1154" y="267" width="13" height="13" fill="url(#yr)"/><rect x="1168" y="267" width="13" height="13" fill="url(#ch)"/>
<rect x="972" y="281" width="13" height="13" fill="#000"/><circle cx="978.500" cy="287.500" r="5" fill="#ddd"/>
<rect x="986" y="281" width="13" height="13" fill="url(#gp)"/><rect x="1000" y="281" width="13" height="13" fill="url(#bp)"/>
<rect x="971" y="295" width="212" height="3" fill="#4a4a4a"/>
<rect x="972" y="297" width="13" height="14" fill="#555"/><path d="M973 300H978L979 302H984V309H973Z" fill="#aaa"/>
<rect x="986" y="297" width="13" height="14" fill="#000"/><rect x="1000" y="297" width="13" height="14" fill="#1a1a1a"/><rect x="1014" y="297" width="13" height="14" fill="#333"/><rect x="1028" y="297" width="13" height="14" fill="#4d4d4d"/><rect x="1042" y="297" width="13" height="14" fill="#666"/><rect x="1056" y="297" width="13" height="14" fill="#808080"/><rect x="1070" y="297" width="13" height="14" fill="#999"/><rect x="1084" y="297" width="13" height="14" fill="#b3b3b3"/><rect x="1098" y="297" width="13" height="14" fill="#ccc"/><rect x="1112" y="297" width="13" height="14" fill="#e6e6e6"/><rect x="1126" y="297" width="13" height="14" fill="#f2f2f2"/>
<rect x="1140" y="297" width="43" height="14" fill="#4a4a4a"/>
<rect x="971" y="311" width="212" height="2" fill="#4a4a4a"/>
<rect x="972" y="313" width="13" height="13" fill="#555"/><path d="M973 315H978L979 317H984V324H973Z" fill="#aaa"/>
<rect x="986" y="313" width="13" height="13" fill="#f00"/><rect x="1000" y="313" width="13" height="13" fill="#f3450a"/><rect x="1014" y="313" width="13" height="13" fill="#ffdd00"/><rect x="1028" y="313" width="13" height="13" fill="#22892c"/><rect x="1042" y="313" width="13" height="13" fill="#10107f"/><rect x="1056" y="313" width="13" height="13" fill="#6a1a8a"/>
<rect x="1070" y="313" width="113" height="13" fill="#4a4a4a"/>
</g>
<rect x="1183" y="238" width="14" height="88" fill="#333"/>
<path d="M1186 249H1194L1190 244Z" fill="#ddd"/>
<rect x="1184" y="255" width="11" height="50" fill="#939393"/>
<path d="M1186 316H1194L1190 321Z" fill="#ddd"/>
<path d="M975 331V341M978 331V341M981 331L985 341" stroke="#bbb" stroke-width="1.500"/><path d="M987 338H992L989.500 341Z" fill="#bbb"/>
<rect x="1056" y="330" width="10" height="10" fill="#bbb"/><path d="M1056 333.500H1066M1056 336.500H1066M1059.500 330V340M1062.500 330V340" stroke="#444"/><path d="M1067 338H1072L1069.500 341Z" fill="#bbb"/>
<rect x="1084.500" y="330.500" width="10" height="10" fill="none" stroke="#777"/><path d="M1087 333H1092M1087 335.500H1092M1087 338H1092" stroke="#777"/>
<use href="#fd" x="1109" y="329"/>
<use href="#nw" x="1137" y="330"/>
<use href="#tr" x="1162" y="329"/>
<path d="M1196 341H1199V338ZM1193 344H1199V340" fill="#777"/>

<!-- Trazo -->
<rect x="966" y="345" width="237" height="3" fill="#2c2c2c"/>
<rect x="966" y="348" width="237" height="17" fill="#333"/>
<rect x="1012" y="348" width="64" height="17" fill="#3c3c3c"/><rect x="1077" y="348" width="80" height="17" fill="#3c3c3c"/>
<rect x="966" y="348" width="45" height="18" fill="#4a4a4a"/>
<path d="M971 354L974 351L977 354M971 357L974 360L977 357" fill="none" stroke="#ccc"/>
<text class="b" x="979" y="360" textLength="26">Trazo</text>
<text class="g" x="1019" y="360" textLength="50">Degradado</text>
<text class="g" x="1084" y="360" textLength="65">Transparencia</text>
<use href="#mn" x="1183" y="351"/>
<text x="971" y="385" textLength="33" style="font-size:10.500px;fill:#b8c0c8">Grosor:</text>
<rect x="1009" y="372" width="84" height="19" fill="#333"/>
<rect x="1010" y="373" width="14" height="17" fill="#5e5e5e"/><path d="M1013 379H1021L1017 375ZM1013 384H1021L1017 388Z" fill="#ccc"/>
<rect x="1025" y="373" width="52" height="17" fill="#a2a2a2"/>
<rect x="1078" y="373" width="14" height="17" fill="#5e5e5e"/><use href="#dn" x="1085" y="381"/>

<!-- Apariencia -->
<rect x="966" y="397" width="237" height="3" fill="#2c2c2c"/>
<rect x="966" y="400" width="237" height="16" fill="#333"/>
<rect x="1030" y="400" width="83" height="16" fill="#3c3c3c"/>
<rect x="966" y="400" width="63" height="17" fill="#4a4a4a"/>
<text class="b" x="973" y="412" textLength="49">Apariencia</text>
<text class="g" x="1037" y="412" textLength="68">Estilos gráficos</text>
<use href="#mn" x="1183" y="403"/>
<rect x="971.500" y="423.500" width="212" height="88" fill="#4a4a4a" stroke="#2e2e2e"/>
<g clip-path="url(#tc)"><rect x="975" y="418" width="19" height="16" fill="#000" stroke="#fff" stroke-width="2"/><text x="1019" y="427" textLength="83" style="font-size:10.500px;fill:#ddd">No hay selección</text></g>
<path d="M971 435.500H1183M971 460.500H1183M971 485.500H1183M996.500 435V511" stroke="#333"/>
<use href="#eye" x="984" y="448"/><use href="#eye" x="984" y="473"/><use href="#eye" x="984" y="498" opacity=".35"/>
<path d="M1002 444V452L1009 448ZM1002 469V477L1009 473Z" fill="#ddd"/>
<text class="o" x="1019" y="451" textLength="27" style="font-size:10.500px">Trazo:</text><path d="M1019 455.500H1046" stroke="#d07f30" stroke-dasharray="1 1"/>
<rect x="1097" y="440" width="17" height="17" fill="#fff" stroke="#111"/><path d="M1100 454L1111 443" stroke="#d8203c" stroke-width="2"/>
<text x="1019" y="476" textLength="34" style="font-size:10.500px;fill:#dde">Relleno:</text>
<rect x="1097" y="465" width="17" height="17" fill="#fff" stroke="#111"/><rect x="1100" y="468" width="11" height="11" fill="#000"/>
<text class="o" x="1019" y="501" textLength="45" style="font-size:10.500px">Opacidad:</text><path d="M1019 505.500H1064" stroke="#d07f30" stroke-dasharray="1 1"/>
<text x="1096" y="501" textLength="51" style="font-size:10.500px">Por defecto</text>
<rect x="1184" y="423" width="13" height="88" fill="#333"/>
<path d="M1186 434H1194L1190 430Z" fill="#ddd"/>
<rect x="1184.500" y="447" width="11" height="50" fill="#939393"/>
<path d="M1186 503H1194L1190 507Z" fill="#ddd"/>
<rect x="978.500" y="516.500" width="8" height="8" fill="#555" stroke="#ccc" stroke-width="2"/>
<rect x="1004.500" y="516.500" width="9" height="9" fill="#999" stroke="#aaa"/><rect x="1006" y="518" width="6" height="6" fill="#777"/>
<text x="1028" y="526" style="font-family:'Liberation Serif',serif;font-style:italic;font-size:14px;fill:#aaa">fx</text><path d="M1040 524H1045L1042.500 527Z" fill="#ccc"/>
<circle cx="1116" cy="521" r="4.500" fill="none" stroke="#bbb" stroke-width="1.500"/><path d="M1113 518L1119 524" stroke="#bbb" stroke-width="1.500"/>
<use href="#nw" x="1137" y="515"/>
<use href="#tr" x="1162" y="514"/>
<path d="M1196 526H1199V523ZM1193 529H1199V525" fill="#777"/>

<!-- Capas -->
<rect x="966" y="531" width="237" height="3" fill="#2c2c2c"/>
<rect x="966" y="534" width="237" height="16" fill="#333"/>
<rect x="1008" y="534" width="91" height="16" fill="#3c3c3c"/>
<rect x="966" y="534" width="41" height="17" fill="#4a4a4a"/>
<text class="b" x="973" y="546" textLength="27">Capas</text>
<text class="g" x="1014" y="546" textLength="78">Mesas de trabajo</text>
<use href="#mn" x="1183" y="537"/>
<rect x="971.500" y="556.500" width="224" height="121" fill="#464646" stroke="#2a2a2a"/>
<rect x="972" y="557" width="223" height="20" fill="#5c6a7c"/>
<path d="M972 577.500H1195M992.500 557V577M1013.500 557V577M1019.500 557V577M1160.500 557V577" stroke="#333"/>
<use href="#eye" x="981" y="566"/>
<rect x="1015" y="558" width="4" height="18" fill="#4a7de0"/>
<path d="M1025 562V571L1032 566.500Z" fill="#ddd"/>
<rect x="1041" y="558" width="18" height="18" fill="#fff" stroke="#111"/>
<g fill="#333"><circle cx="1052" cy="567" r="2.500"/><circle cx="1048" cy="564" r="1"/><circle cx="1056" cy="564" r="1"/><circle cx="1048" cy="570" r="1"/><circle cx="1056" cy="570" r="1"/><circle cx="1052" cy="562" r="1"/><circle cx="1052" cy="572" r="1"/><circle cx="1046" cy="567" r="1"/><circle cx="1057" cy="567" r="1"/></g>
<rect x="1042" y="561" width="2" height="3" fill="#e0a000"/><rect x="1044" y="562" width="2" height="2" fill="#1b3a9a"/>
<text x="1064" y="570" textLength="31" style="font-size:10.500px;fill:#e0e4e8">Capa 1</text>
<circle cx="1170" cy="567" r="4" fill="#4a5868" stroke="#bbb"/>
<path d="M1190 557H1195V562Z" fill="#ddd"/>
<text x="971" y="697" textLength="29" style="font-size:10.500px">1 capa</text>
<circle cx="1065" cy="691" r="4.500" fill="none" stroke="#666" stroke-width="1.200"/><path d="M1062 695L1059 699" stroke="#666"/>
<rect x="1084.500" y="688.500" width="8" height="8" fill="none" stroke="#666"/><rect x="1088.500" y="692.500" width="7" height="7" fill="none" stroke="#666"/>
<path d="M1109 688H1113L1116 692L1113 692M1117 689H1123V699H1117Z" fill="#bbb"/>
<use href="#nw" x="1137" y="689"/>
<use href="#tr" x="1162" y="689"/>
</svg>
</body></html>
